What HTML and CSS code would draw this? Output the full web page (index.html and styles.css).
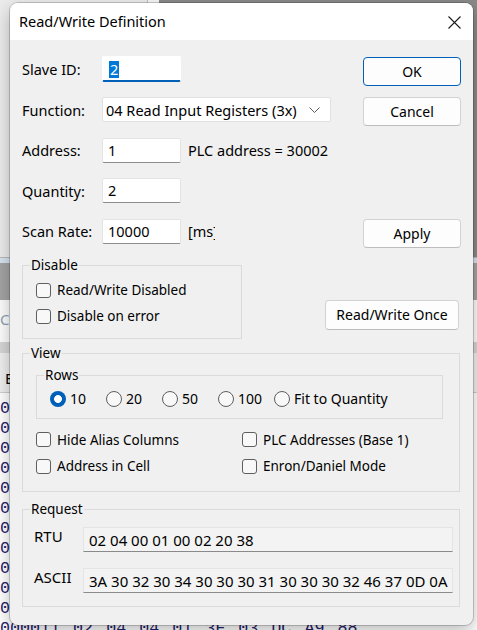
FILE: index.html
```html
<!DOCTYPE html>
<html>
<head>
<meta charset="utf-8">
<title>Read/Write Definition</title>
<link rel="stylesheet" href="styles.css">
</head>
<body>
<div class="desktop">
  <div class="app">
    <div class="app-top">
      <div class="app-pane"></div>
      <div class="app-sep"></div>
      <div class="app-dark"></div>
    </div>
    <div class="app-line"></div>
    <div class="app-tabsel"></div>
    <div class="app-toolbar"></div>
    <div class="app-caption">Co</div>
    <div class="app-band"></div>
    <div class="app-head">E</div>
    <div class="app-rows">
      <div class="app-row">00</div>
      <div class="app-row">00</div>
      <div class="app-row">00</div>
      <div class="app-row">00</div>
      <div class="app-row">00</div>
      <div class="app-row">00</div>
      <div class="app-row">00</div>
      <div class="app-row">00</div>
      <div class="app-row">00</div>
      <div class="app-row">00</div>
      <div class="app-row">00</div>
    </div>
    <div class="app-row last">000011 02 04 04 01 3F 03 DC A9 88</div>
  </div>

  <div class="dialog">
    <div class="titlebar">
      <span class="title">Read/Write Definition</span>
      <svg class="close" width="13" height="13" viewBox="0 0 13 13"><path d="M0.5 0.5L12.5 12.5M12.5 0.5L0.5 12.5" stroke="#1c1c1c" stroke-width="1.1" fill="none"/></svg>
    </div>
    <div class="content">
      <div class="top">
        <div class="form">
          <span class="lbl">Slave ID:</span>
          <div class="field"><span class="input focus"><span class="selected">2</span></span></div>
          <span class="lbl">Function:</span>
          <div class="field"><span class="select"><span>04 Read Input Registers (3x)</span><svg class="chev" width="11" height="6" viewBox="0 0 11 6"><path d="M0.5 0.5L5.5 5.5L10.5 0.5" stroke="#5a5a5a" stroke-width="1" fill="none"/></svg></span></div>
          <span class="lbl">Address:</span>
          <div class="field"><span class="input">1</span><span class="note">PLC address = 30002</span></div>
          <span class="lbl">Quantity:</span>
          <div class="field"><span class="input">2</span></div>
          <span class="lbl">Scan Rate:</span>
          <div class="field"><span class="input">10000</span><span class="note clip">[ms]</span></div>
        </div>
        <div class="buttons">
          <button class="btn default">OK</button>
          <button class="btn cancel">Cancel</button>
          <button class="btn apply">Apply</button>
        </div>
      </div>

      <div class="middle">
        <div class="group disable">
          <div class="legend">Disable</div>
          <div class="disable-body">
            <label class="check"><span class="box"></span>Read/Write Disabled</label>
            <label class="check"><span class="box"></span>Disable on error</label>
          </div>
        </div>
        <button class="btn once">Read/Write Once</button>
      </div>

      <div class="group view">
        <div class="legend">View</div>
        <div class="view-body">
          <div class="group rows">
            <div class="legend">Rows</div>
            <div class="radios">
              <label class="radio"><span class="dot on"></span>10</label>
              <label class="radio"><span class="dot"></span>20</label>
              <label class="radio"><span class="dot"></span>50</label>
              <label class="radio"><span class="dot"></span>100</label>
              <label class="radio"><span class="dot"></span>Fit to Quantity</label>
            </div>
          </div>
          <div class="checks">
            <label class="check"><span class="box"></span>Hide Alias Columns</label>
            <label class="check"><span class="box"></span>PLC Addresses (Base 1)</label>
            <label class="check"><span class="box"></span>Address in Cell</label>
            <label class="check"><span class="box"></span>Enron/Daniel Mode</label>
          </div>
        </div>
      </div>

      <div class="group request">
        <div class="legend">Request</div>
        <div class="request-body">
          <div class="req-row"><span class="req-label">RTU</span><span class="req-field">02 04 00 01 00 02 20 38</span></div>
          <div class="req-row"><span class="req-label">ASCII</span><span class="req-field">3A 30 32 30 34 30 30 30 31 30 30 30 32 46 37 0D 0A</span></div>
        </div>
      </div>
    </div>
  </div>
</div>
</body>
</html>
```

FILE: styles.css
```css
* { box-sizing: border-box; }
html, body { margin: 0; padding: 0; }
body {
  width: 477px;
  height: 630px;
  overflow: hidden;
  font-family: "Noto Sans", "Open Sans", sans-serif;
  font-size: 14px;
  line-height: 18px;
  color: #000;
}

/* background application */
.desktop { position: relative; width: 477px; height: 630px; overflow: hidden; background: #fbfbfb; }
.app { display: flex; flex-direction: column; }
.app-top { height: 257px; display: flex; }
.app-pane { width: 147px; background: #ececec; }
.app-sep { width: 12px; background: #f7f7f7; border-left: 1px solid #c6c6c6; }
.app-dark { flex: 1; background: #8a8a8a; }
.app-line { height: 1px; background: #b9b9b9; }
.app-tabsel { height: 5px; background: #d7e3ef; }
.app-toolbar { height: 37px; background: #a4a4a4; }
.app-caption { height: 42px; background: #fdfdfd; color: #8fa0b4; padding: 10px 0 0 0; font-size: 15px; }
.app-band { height: 11px; background: #d6d6d6; }
.app-head { height: 40px; background: #efefef; border-bottom: 1px solid #cfcfcf; padding: 16px 0 0 5px; font-size: 15px; }
.app-rows { padding-top: 6px; background: #fff; }
.app-row {
  height: 20px;
  line-height: 20px;
  font-family: "Liberation Mono", "DejaVu Sans Mono", monospace;
  font-size: 16.7px;
  word-spacing: 3px;
  color: #24206a;
  white-space: pre;
  background: #fff;
}

/* dialog */
.dialog {
  position: absolute;
  left: 10px;
  top: 3px;
  width: 463px;
  height: 622px;
  border-radius: 8px;
  overflow: hidden;
  background: #f0f0f0;
  box-shadow: 0 0 0 1px rgba(0,0,0,0.18), 0 6px 18px rgba(0,0,0,0.28);
  display: flex;
  flex-direction: column;
}
.titlebar {
  height: 37px;
  background: #fff;
  display: flex;
  align-items: center;
  justify-content: space-between;
  padding: 0 12px 0 9px;
  flex-shrink: 0;
}
.title { font-size: 14.5px; padding-bottom: 2px; }
.close { margin-top: 2px; }

.content { padding: 16px 12px 0 12px; }

/* top form */
.top { display: flex; justify-content: space-between; font-size: 14.5px; }
.form {
  display: grid;
  grid-template-columns: 80px auto;
  grid-auto-rows: 26px;
  row-gap: 14.5px;
  align-items: center;
}
.field { display: flex; align-items: center; height: 100%; }
.input {
  width: 79px;
  height: 25px;
  background: #fff;
  border: 1px solid #e3e3e3;
  border-bottom-color: #8d8d8d;
  border-radius: 2px;
  padding: 2px 0 0 5px;
  line-height: 19px;
}
.input.focus {
  height: 26px;
  border-color: #fff;
  border-bottom: 2px solid #005fb8;
  padding-top: 3px;
  padding-left: 6px;
}
.selected { background: #0078d7; color: #fff; padding: 0 1px; display: inline-block; line-height: 17px; }
.select {
  width: 229px;
  height: 25px;
  background: #fff;
  border: 1px solid #e0e0e0;
  border-radius: 2px;
  display: flex;
  align-items: center;
  justify-content: space-between;
  padding: 0 10px 0 3px;
}
.chev { margin-top: 1px; }
.note { margin-left: 7px; white-space: nowrap; }
.note.clip { width: 27px; overflow: hidden; }

.buttons { display: flex; flex-direction: column; width: 98px; padding-top: 1px; }
.btn {
  font-family: inherit;
  font-size: 14px;
  color: #000;
  background: #fdfdfd;
  border: 1px solid #d2d2d2;
  border-bottom-color: #bdbdbd;
  border-radius: 4px;
  height: 29px;
  padding: 0;
  line-height: 18px;
}
.btn.default { border-color: #005fb8; }
.btn.cancel { margin-top: 11px; }
.btn.apply { margin-top: 93px; }

/* group boxes */
.group { border: 1px solid #dadada; }
.legend {
  display: table;
  margin: -10px 0 0 7px;
  padding: 0 1px;
  background: #f0f0f0;
  line-height: 18px;
  font-size: 13.5px;
}

.middle { display: flex; align-items: flex-end; justify-content: space-between; margin-top: 17px; }
.disable { width: 220px; }
.disable-body { padding: 7px 0 13px 13px; display: flex; flex-direction: column; gap: 8px; }
.btn.once { width: 134px; height: 30px; margin: 0 2px 9px 0; }

.check { display: flex; align-items: center; height: 18px; white-space: nowrap; font-size: 13.5px; }
.box {
  width: 15px;
  height: 15px;
  border: 1px solid #5f5f5f;
  border-radius: 3px;
  background: #f8f8f8;
  margin-right: 6px;
  flex-shrink: 0;
}

.view { margin-top: 14px; width: 438px; }
.view-body { padding: 0 0 16px 13px; }
.rows { width: 407px; margin-top: 13px; }
.radios { display: grid; grid-template-columns: 56px 56px 56px 56px auto; padding: 7px 0 11px 13px; }
.radio { display: flex; align-items: center; height: 16px; white-space: nowrap; font-size: 14px; }
.dot {
  width: 16px;
  height: 16px;
  border-radius: 50%;
  border: 1px solid #5f5f5f;
  background: #f8f8f8;
  margin-right: 4px;
  flex-shrink: 0;
}
.dot.on {
  border: none;
  background: radial-gradient(circle, #fff 0, #fff 3.6px, #005fb8 4.2px);
}
.checks {
  display: grid;
  grid-template-columns: 206px auto;
  row-gap: 8.5px;
  margin-top: 11.5px;
}

.request { margin-top: 17px; width: 438px; }
.request-body { padding: 9px 6px 13px 11px; display: flex; flex-direction: column; gap: 16px; }
.req-row { display: flex; align-items: flex-start; }
.req-label { width: 49px; line-height: 18px; font-size: 15px; }
.req-field {
  flex: 1;
  height: 25px;
  background: #f3f3f3;
  border: 1px solid #e4e4e4;
  border-bottom-color: #8a8a8a;
  padding: 3px 0 0 5px;
  font-size: 15px;
  line-height: 18px;
  white-space: nowrap;
}
```
